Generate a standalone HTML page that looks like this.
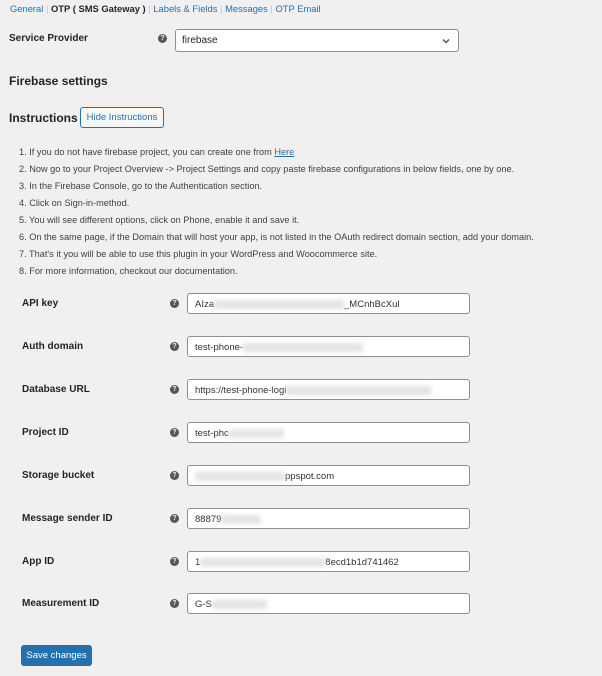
<!DOCTYPE html>
<html><head><style>
body{margin:0;background:#f0f0f1;width:602px;height:676px;overflow:hidden;font-family:"Liberation Sans",Arial,sans-serif;color:#1d2327;position:relative}
.a{position:absolute;white-space:nowrap}
.nav{top:3px;left:10px;font-size:9.4px;color:#c3c4c7}
.nav a{color:#2271b1;text-decoration:none}
.nav b{color:#1d2327;font-weight:600}
.lbl{font-size:10px;font-weight:600}
.help{width:9px;height:9px;border-radius:50%;background:#50575e;color:#f0f0f1;font-size:7px;font-weight:bold;text-align:center;line-height:9px}
.inp{background:#fff;border:1px solid #8c8f94;border-radius:3px;height:21px;width:283px;font-size:9.5px;line-height:21px;padding-left:7px;box-sizing:border-box;color:#2c3338}
.bl{display:inline-block;height:9px;background:#ddd;filter:blur(2px);vertical-align:middle;opacity:.8}
.ins{font-size:9.2px;color:#3c434a;left:19px}
</style></head><body>
<div class="a nav"><a>General</a> | <b>OTP ( SMS Gateway )</b> | <a>Labels &amp; Fields</a> | <a>Messages</a> | <a>OTP Email</a></div>
<div class="a lbl" style="left:9px;top:33px">Service Provider</div>
<div class="a help" style="left:158px;top:34px">?</div>
<div class="a" style="left:175px;top:29px;width:284px;height:23px;background:#fff;border:1px solid #8c8f94;border-radius:3px;box-sizing:border-box;font-size:10px;line-height:21px;padding-left:6px">firebase
<svg style="position:absolute;right:8px;top:8px" width="8" height="6" viewBox="0 0 8 6"><path d="M1 1.5L4 4.5L7 1.5" stroke="#50575e" stroke-width="1.5" fill="none"/></svg></div>
<div class="a" style="left:9px;top:74px;font-size:12px;font-weight:600">Firebase settings</div>
<div class="a" style="left:9px;top:111px;font-size:12px;font-weight:600">Instructions</div>
<div class="a" style="left:80px;top:107px;width:84px;height:21px;border:1px solid #2271b1;border-radius:3px;background:#f6f7f7;color:#2271b1;font-size:9.5px;line-height:20px;text-align:center;box-sizing:border-box">Hide Instructions</div>
<div class="a ins" style="top:147px">1. If you do not have firebase project, you can create one from <span style="color:#2271b1;text-decoration:underline">Here</span></div>
<div class="a ins" style="top:164px">2. Now go to your Project Overview -&gt; Project Settings and copy paste firebase configurations in below fields, one by one.</div>
<div class="a ins" style="top:181px">3. In the Firebase Console, go to the Authentication section.</div>
<div class="a ins" style="top:198px">4. Click on Sign-in-method.</div>
<div class="a ins" style="top:215px">5. You will see different options, click on Phone, enable it and save it.</div>
<div class="a ins" style="top:232px">6. On the same page, if the Domain that will host your app, is not listed in the OAuth redirect domain section, add your domain.</div>
<div class="a ins" style="top:249px">7. That's it you will be able to use this plugin in your WordPress and Woocommerce site.</div>
<div class="a ins" style="top:266px">8. For more information, checkout our documentation.</div>

<div class="a lbl" style="left:22px;top:298px">API key</div><div class="a help" style="left:170px;top:299px">?</div>
<div class="a inp" style="left:187px;top:293px">AIza<span class="bl" style="width:130px"></span>_MCnhBcXul</div>
<div class="a lbl" style="left:22px;top:341px">Auth domain</div><div class="a help" style="left:170px;top:342px">?</div>
<div class="a inp" style="left:187px;top:336px">test-phone-<span class="bl" style="width:120px"></span></div>
<div class="a lbl" style="left:22px;top:384px">Database URL</div><div class="a help" style="left:170px;top:385px">?</div>
<div class="a inp" style="left:187px;top:379px">https://test-phone-logi<span class="bl" style="width:145px"></span></div>
<div class="a lbl" style="left:22px;top:427px">Project ID</div><div class="a help" style="left:170px;top:428px">?</div>
<div class="a inp" style="left:187px;top:422px">test-phc<span class="bl" style="width:55px"></span></div>
<div class="a lbl" style="left:22px;top:470px">Storage bucket</div><div class="a help" style="left:170px;top:471px">?</div>
<div class="a inp" style="left:187px;top:465px"><span class="bl" style="width:90px"></span>ppspot.com</div>
<div class="a lbl" style="left:22px;top:513px">Message sender ID</div><div class="a help" style="left:170px;top:514px">?</div>
<div class="a inp" style="left:187px;top:508px">88879<span class="bl" style="width:40px"></span></div>
<div class="a lbl" style="left:22px;top:556px">App ID</div><div class="a help" style="left:170px;top:557px">?</div>
<div class="a inp" style="left:187px;top:551px">1<span class="bl" style="width:125px"></span>8ecd1b1d741462</div>
<div class="a lbl" style="left:22px;top:598px">Measurement ID</div><div class="a help" style="left:170px;top:599px">?</div>
<div class="a inp" style="left:187px;top:593px">G-S<span class="bl" style="width:55px"></span></div>

<div class="a" style="left:21px;top:645px;width:71px;height:21px;background:#2271b1;border-radius:3px;color:#fff;font-size:9.5px;line-height:21px;text-align:center">Save changes</div>
</body></html>
